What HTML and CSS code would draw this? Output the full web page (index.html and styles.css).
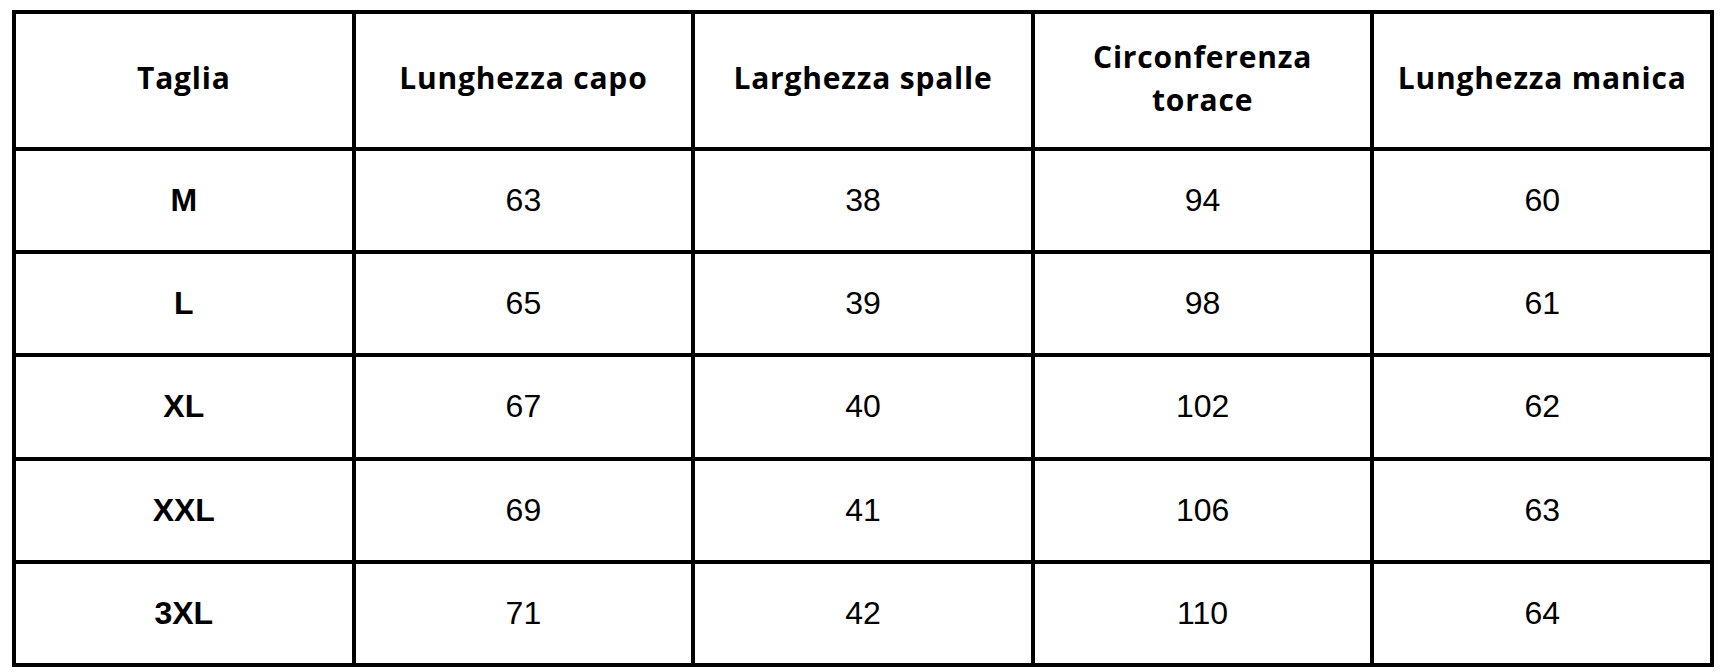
FILE: index.html
```html
<!DOCTYPE html>
<html lang="it">
<head>
<meta charset="utf-8">
<title>Tabella taglie</title>
<link rel="stylesheet" href="styles.css">
</head>
<body>
<div class="size-table">
  <div class="cell head">Taglia</div>
  <div class="cell head">Lunghezza capo</div>
  <div class="cell head">Larghezza spalle</div>
  <div class="cell head">Circonferenza<br>torace</div>
  <div class="cell head">Lunghezza manica</div>

  <div class="cell size">M</div>
  <div class="cell">63</div>
  <div class="cell">38</div>
  <div class="cell">94</div>
  <div class="cell">60</div>

  <div class="cell size">L</div>
  <div class="cell">65</div>
  <div class="cell">39</div>
  <div class="cell">98</div>
  <div class="cell">61</div>

  <div class="cell size">XL</div>
  <div class="cell">67</div>
  <div class="cell">40</div>
  <div class="cell">102</div>
  <div class="cell">62</div>

  <div class="cell size">XXL</div>
  <div class="cell">69</div>
  <div class="cell">41</div>
  <div class="cell">106</div>
  <div class="cell">63</div>

  <div class="cell size">3XL</div>
  <div class="cell">71</div>
  <div class="cell">42</div>
  <div class="cell">110</div>
  <div class="cell">64</div>
</div>
</body>
</html>
```

FILE: styles.css
```css
html, body {
  margin: 0;
  padding: 0;
  background: #ffffff;
}

body {
  padding: 10px 0 0 12px;
}

.size-table {
  width: 1702px;
  height: 657px;
  box-sizing: border-box;
  display: grid;
  grid-template-columns: repeat(5, 1fr);
  grid-template-rows: 133px repeat(5, 1fr);
  gap: 4px;
  padding: 4px;
  background: #000000;
}

.cell {
  background: #ffffff;
  display: flex;
  align-items: center;
  justify-content: center;
  text-align: center;
  font-family: "Liberation Sans", Arial, sans-serif;
  font-size: 32px;
  color: #000000;
}

.head {
  font-family: "Open Sans", "Liberation Sans", sans-serif;
  font-weight: 700;
  font-size: 30px;
  line-height: 1.45;
  letter-spacing: 0.8px;
  padding-bottom: 5px;
  box-sizing: border-box;
}

.size {
  font-weight: 700;
}
```
